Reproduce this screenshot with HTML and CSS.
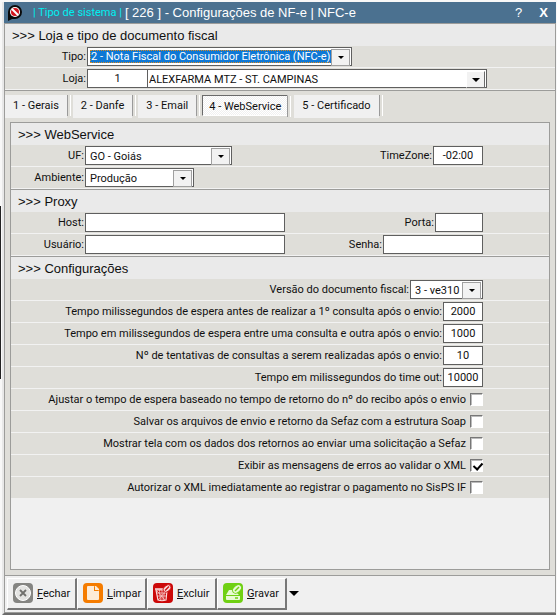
FILE: index.html
```html
<!DOCTYPE html>
<html lang="pt-BR">
<head>
<meta charset="utf-8">
<meta name="viewport" content="width=device-width, initial-scale=1">
<title>Configurações de NF-e | NFC-e</title>
<link rel="stylesheet" href="styles.css">
</head>
<body>
<div class="window">
  <header class="titlebar">
    <svg class="app-icon" viewBox="0 0 14 16" aria-hidden="true">
      <path d="M0 16V7a7 7 0 1 1 7 7H4z" fill="#0a0a0a"/>
      <circle cx="7" cy="7" r="5" fill="#fff"/>
      <circle cx="7" cy="7" r="4" fill="#d3141c"/>
      <path d="M4 4l6 6" stroke="#fff" stroke-width="2"/>
    </svg>
    <span class="system">| Tipo de sistema |</span>
    <h1 class="title">[ 226 ] - Configurações de NF-e | NFC-e</h1>
    <button type="button" class="title-button">?</button>
    <button type="button" class="title-button close">X</button>
  </header>

  <form class="body">
    <section class="section top">
      <h2 class="heading">&gt;&gt;&gt; Loja e tipo de documento fiscal</h2>
      <div class="row">
        <label class="name" for="tipo">Tipo:</label>
        <span class="combo focused"><select id="tipo"><option>2 - Nota Fiscal do Consumidor Eletrônica (NFC-e)</option></select></span>
      </div>
      <div class="row">
        <label class="name" for="loja">Loja:</label>
        <input class="field code" id="loja" type="text" value="1">
        <span class="combo combo-loja raised"><select aria-label="Nome da loja"><option>ALEXFARMA MTZ - ST. CAMPINAS</option></select></span>
      </div>
    </section>

    <nav class="tabs">
      <button type="button" class="tab">1 - Gerais</button>
      <button type="button" class="tab">2 - Danfe</button>
      <button type="button" class="tab">3 - Email</button>
      <button type="button" class="tab active">4 - WebService</button>
      <button type="button" class="tab">5 - Certificado</button>
    </nav>

    <div class="panel">
      <section class="section">
        <h2 class="heading">&gt;&gt;&gt; WebService</h2>
        <div class="row">
          <label class="name" for="uf">UF:</label>
          <span class="combo combo-uf"><select id="uf"><option>GO - Goiás</option></select></span>
          <label class="name end" for="timezone">TimeZone:</label>
          <input class="field timezone" id="timezone" type="text" value="-02:00">
        </div>
        <div class="row">
          <label class="name" for="ambiente">Ambiente:</label>
          <span class="combo combo-ambiente"><select id="ambiente"><option>Produção</option></select></span>
        </div>
      </section>

      <section class="section">
        <h2 class="heading">&gt;&gt;&gt; Proxy</h2>
        <div class="row">
          <label class="name" for="host">Host:</label>
          <input class="field wide" id="host" type="text">
          <label class="name end" for="porta">Porta:</label>
          <input class="field porta" id="porta" type="text">
        </div>
        <div class="row">
          <label class="name" for="usuario">Usuário:</label>
          <input class="field wide" id="usuario" type="text">
          <label class="name end" for="senha">Senha:</label>
          <input class="field senha" id="senha" type="password">
        </div>
      </section>

      <section class="section">
        <h2 class="heading">&gt;&gt;&gt; Configurações</h2>
        <div class="row">
          <label class="name end" for="versao">Versão do documento fiscal:</label>
          <span class="combo combo-versao"><select id="versao"><option>3 - ve310</option></select></span>
        </div>
        <div class="row">
          <label class="name end" for="espera1">Tempo milissegundos de espera antes de realizar a 1º consulta após o envio:</label>
          <input class="field number" id="espera1" type="text" value="2000">
        </div>
        <div class="row">
          <label class="name end" for="espera2">Tempo em milissegundos de espera entre uma consulta e outra após o envio:</label>
          <input class="field number" id="espera2" type="text" value="1000">
        </div>
        <div class="row">
          <label class="name end" for="tentativas">Nº de tentativas de consultas a serem realizadas após o envio:</label>
          <input class="field number" id="tentativas" type="text" value="10">
        </div>
        <div class="row">
          <label class="name end" for="timeout">Tempo em milissegundos do time out:</label>
          <input class="field number" id="timeout" type="text" value="10000">
        </div>
        <div class="row">
          <label class="name end" for="ajustar">Ajustar o tempo de espera baseado no tempo de retorno do nº do recibo após o envio</label>
          <input class="check" id="ajustar" type="checkbox">
        </div>
        <div class="row">
          <label class="name end" for="salvar">Salvar os arquivos de envio e retorno da Sefaz com a estrutura Soap</label>
          <input class="check" id="salvar" type="checkbox">
        </div>
        <div class="row">
          <label class="name end" for="mostrar">Mostrar tela com os dados dos retornos ao enviar uma solicitação a Sefaz</label>
          <input class="check" id="mostrar" type="checkbox">
        </div>
        <div class="row">
          <label class="name end" for="exibir">Exibir as mensagens de erros ao validar o XML</label>
          <input class="check" id="exibir" type="checkbox" checked>
        </div>
        <div class="row">
          <label class="name end" for="autorizar">Autorizar o XML imediatamente ao registrar o pagamento no SisPS IF</label>
          <input class="check" id="autorizar" type="checkbox">
        </div>
      </section>
    </div>
  </form>

  <footer class="actions">
    <button type="button" class="action">
      <svg class="icon" viewBox="0 0 20 20" aria-hidden="true">
        <rect width="20" height="20" rx="4" fill="#858582"/>
        <circle cx="10" cy="10" r="7.500" fill="#e4e4e2" stroke="#fff" stroke-width="1"/>
        <path d="M7 7l6 6M13 7l-6 6" stroke="#70706d" stroke-width="1.800"/>
      </svg>
      <span><u>F</u>echar</span>
    </button>
    <button type="button" class="action">
      <svg class="icon" viewBox="0 0 20 20" aria-hidden="true">
        <rect width="20" height="20" rx="4" fill="#f57c00"/>
        <path d="M5 3h6l5 5v8q0 1-1 1H5q-1 0-1-1V4q0-1 1-1z" fill="#fdebd6"/>
        <path d="M11 3v5h5z" fill="#f57c00"/>
        <path d="M12 3h1l3 3v1h-4z" fill="#fdebd6"/>
      </svg>
      <span><u>L</u>impar</span>
    </button>
    <button type="button" class="action">
      <svg class="icon" viewBox="0 0 20 20" aria-hidden="true">
        <rect width="20" height="20" rx="4" fill="#cc0808"/>
        <path d="M3 7h11l-1 10q-4 1.500-8 0z" fill="none" stroke="#fbdcdc" stroke-width="1.200"/>
        <path d="M3.500 10h10M4 13h9M6.500 7l1 11M9 7v11M11.500 7l-1 11M4 8l8 9M13 8l-8 9" stroke="#fbdcdc" stroke-width=".7"/>
        <path d="M2 6h8" stroke="#fbdcdc" stroke-width="1.500"/>
        <ellipse cx="14" cy="5.500" rx="4.500" ry="3" transform="rotate(-40 14 5.500)" fill="#fbdcdc" stroke="#cc0808" stroke-width=".8"/>
        <path d="M12 7.500l4-4" stroke="#cc0808" stroke-width="1.200"/>
      </svg>
      <span><u>E</u>xcluir</span>
    </button>
    <button type="button" class="action">
      <svg class="icon" viewBox="0 0 20 20" aria-hidden="true">
        <rect width="20" height="20" rx="4" fill="#6fd013"/>
        <path d="M3 12l3-5h5l5 5z" fill="#e8fad4"/>
        <path d="M3 13h14v3q0 1-1 1H4q-1 0-1-1z" fill="#e8fad4"/>
        <path d="M12 15h3" stroke="#6fd013" stroke-width="1.500"/>
        <ellipse cx="14" cy="6" rx="5" ry="3.500" transform="rotate(-40 14 6)" fill="#e8fad4" stroke="#6fd013"/>
        <path d="M12 8l4-4" stroke="#6fd013" stroke-width="1.400"/>
      </svg>
      <span><u>G</u>ravar</span>
    </button>
    <button type="button" class="more" aria-label="Mais opções">
      <svg class="more-arrow" viewBox="0 0 10 5" aria-hidden="true"><path d="M0 0h10L5 5z"/></svg>
    </button>
  </footer>
</div>
</body>
</html>
```
FILE: styles.css
```css
* { box-sizing: border-box; }

body {
  margin: 0;
  min-height: 100vh;
  display: flex;
  padding: 2px 1px 0 2px;
  background: #f8f8f8;
  color: #101010;
  font-family: Roboto, "Liberation Sans", Arial, sans-serif;
  font-size: 11px;
}

body::before {
  content: "";
  position: absolute;
  left: 0;
  top: 206px;
  width: 1px;
  height: 173px;
  background: #222;
}

button, input, select {
  font: inherit;
  color: inherit;
  margin: 0;
}

.window {
  flex: 1;
  min-width: 0;
  display: flex;
  flex-direction: column;
  border-left: 2px solid #e8e8e8;
  border-bottom: 2px solid #6c6c6c;
}

.titlebar {
  display: flex;
  align-items: center;
  height: 21px;
  padding-left: 4px;
  background: #4b7190;
  color: #fff;
}

.app-icon { width: 14px; height: 16px; }

.system {
  margin-left: 11px;
  color: #00f0f0;
}

.title {
  margin: 0 auto 0 3px;
  font-family: "Liberation Sans", Arial, sans-serif;
  font-size: 13px;
  font-weight: normal;
}

.title-button {
  width: 25px;
  padding: 0;
  border: 0;
  background: none;
  font-family: "Liberation Sans", Arial, sans-serif;
  font-size: 13px;
}

.close { font-weight: bold; }

.body {
  flex: 1;
  display: flex;
  flex-direction: column;
  border: 1px solid #9c9c9a;
  background: #dfded9;
}

.heading {
  margin: 0;
  height: 22px;
  padding-left: 7px;
  background: #eaeaea;
  font-family: "Liberation Sans", Arial, sans-serif;
  font-size: 13px;
  font-weight: normal;
  line-height: 24px;
}

.row {
  display: flex;
  align-items: center;
  height: 22px;
  padding-right: 66px;
  border-bottom: 1px solid #f2f2f2;
}

.section { border-bottom: 1px solid #9c9c9a; }

.name {
  flex: 0 0 74px;
  padding-right: 1px;
  text-align: right;
  white-space: nowrap;
}

.top .name { flex-basis: 82px; }
.name.end { flex: 1; }

.field, .combo {
  height: 19px;
  border: 1px solid #5f5f5f;
  background: #fff;
}

.field {
  padding: 0 2px 1px;
  border-radius: 0;
  text-align: center;
}

.code { width: 60px; border-right: 0; }
.timezone { width: 50px; }
.wide { width: 200px; text-align: left; }
.porta { width: 48px; }
.senha { width: 100px; text-align: left; }
.number { width: 40px; }

.combo {
  position: relative;
  display: flex;
}

.combo select {
  flex: 1;
  min-width: 0;
  appearance: none;
  padding: 1px 18px 0 4px;
  border: 0;
  border-radius: 0;
  background: none;
}

.combo::before {
  content: "";
  position: absolute;
  top: 1px;
  right: 1px;
  width: 17px;
  height: 15px;
  border: 1px solid #a0a0a0;
  background: #f2f2f2;
  pointer-events: none;
}

.combo::after {
  content: "";
  position: absolute;
  top: 8px;
  right: 7px;
  border: 3px solid transparent;
  border-top-color: #000;
  border-bottom: 0;
  pointer-events: none;
}

.combo-loja { width: 340px; }
.combo-uf { width: 147px; }
.combo-ambiente { width: 109px; }
.combo-versao { width: 73px; }

.focused select {
  margin: 2px 19px 2px 2px;
  padding: 0 1px;
  outline: 1px dotted #e08a1c;
  outline-offset: -1px;
  background: #0f78d4;
  color: #fff;
}

.raised select { padding-left: 1px; }

.raised::before {
  border-color: #fff #6a6a6a #6a6a6a #fff;
}

.raised::after {
  right: 6px;
  border-width: 4px 4px 0;
}

.tabs {
  display: flex;
  height: 31px;
  padding: 4px 0 4px;
}

.tab {
  position: relative;
  height: 23px;
  margin-right: 6px;
  padding: 0 8px 2px;
  border: 0;
  background: #f0f0f0;
  white-space: nowrap;
}

.tab::after {
  content: "";
  position: absolute;
  top: 0;
  right: -4px;
  width: 2px;
  height: 21px;
  border-left: 1px solid #9a9a9a;
  border-right: 1px solid #fff;
}

.tab.active {
  height: 21px;
  padding: 1px 6px 0;
  border: 1px solid;
  border-color: #6a6a6a #fff #fff #6a6a6a;
  background: repeating-conic-gradient(#fff 0 25%, #f0f0f0 0 50%) 0 0 / 2px 2px;
}

.panel {
  flex: 1;
  margin: 0 5px 5px;
  border: 1px solid #9c9c9a;
  background: #f0f0f0;
}

.panel .section {
  background: #dfded9;
}

.panel .section:last-child { border-bottom: 0; }
.panel .section:last-child .row:last-child { height: 21px; border-bottom: 0; }

.check {
  appearance: none;
  width: 13px;
  height: 13px;
  margin-left: 3px;
  border: 1px solid;
  border-color: #777 #fff #fff #777;
  background: #fff;
  box-shadow: inset 1px 1px #bbb;
}

.check:checked::before {
  content: "";
  display: block;
  width: 4px;
  height: 7px;
  margin: 1px 0 0 4px;
  border: solid #000;
  border-width: 0 2px 2px 0;
  transform: rotate(42deg);
}

.actions {
  display: flex;
  align-items: center;
  height: 37px;
  padding: 1px 2px 2px;
  border: 1px solid #9c9c9a;
  border-top: 0;
  background: #f0f0f0;
}

.action {
  display: flex;
  align-items: center;
  gap: 4px;
  width: 70px;
  height: 32px;
  padding: 0 0 0 5px;
  border: solid;
  border-width: 1px 2px 2px 1px;
  border-color: #fff #777 #777 #fff;
  background: #f0f0f0;
  white-space: nowrap;
}

.icon { width: 20px; height: 20px; }

.more {
  display: flex;
  padding: 2px;
  border: 0;
  background: none;
}

.more-arrow { width: 10px; height: 5px; }
```
